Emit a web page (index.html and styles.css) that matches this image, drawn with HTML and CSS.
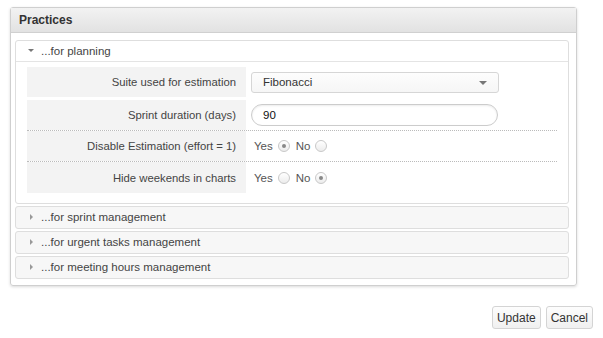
FILE: index.html
```html
<!DOCTYPE html>
<html lang="en">
<head>
    <meta charset="UTF-8">
    <title>Practices</title>
    <link rel="stylesheet" href="styles.css">
</head>
<body>

<div class="panel">
    <div class="panel-header">Practices</div>
    <div class="panel-body">

        <div class="section open">
            <div class="section-title"><span class="arrow down"></span>...for planning</div>
            <div class="section-content">
                <div class="row first">
                    <div class="label">Suite used for estimation</div>
                    <div class="value">
                        <div class="select">Fibonacci<span class="caret"></span></div>
                    </div>
                </div>
                <div class="row dotted">
                    <div class="label">Sprint duration (days)</div>
                    <div class="value">
                        <input class="text" type="text" value="90">
                    </div>
                </div>
                <div class="row dotted">
                    <div class="label">Disable Estimation (effort = 1)</div>
                    <div class="value radios">
                        Yes <span class="radio checked"></span> No <span class="radio"></span>
                    </div>
                </div>
                <div class="row last">
                    <div class="label">Hide weekends in charts</div>
                    <div class="value radios">
                        Yes <span class="radio"></span> No <span class="radio checked"></span>
                    </div>
                </div>
            </div>
        </div>

        <div class="section">
            <div class="section-title"><span class="arrow right"></span>...for sprint management</div>
        </div>
        <div class="section">
            <div class="section-title"><span class="arrow right"></span>...for urgent tasks management</div>
        </div>
        <div class="section">
            <div class="section-title"><span class="arrow right"></span>...for meeting hours management</div>
        </div>

    </div>
</div>

<div class="actions">
    <button>Update</button>
    <button>Cancel</button>
</div>

</body>
</html>
```

FILE: styles.css
```css
body {
    margin: 0;
    padding: 7px 10px 0 10px;
    font-family: "Liberation Sans", Arial, sans-serif;
    font-size: 11.5px;
    color: #333;
    background: #fff;
}
.panel {
    width: 565px;
    border: 1px solid #cfcfcf;
    border-radius: 3px;
    box-shadow: 0 1px 3px rgba(0, 0, 0, 0.15);
}
.panel-header {
    height: 24px;
    line-height: 24px;
    padding-left: 8px;
    font-weight: bold;
    font-size: 12px;
    color: #333;
    background: linear-gradient(#f2f2f2, #e2e2e2);
    border-bottom: 1px solid #d0d0d0;
}
.panel-body {
    padding: 7px 7px 4px 4px;
}
.section {
    border: 1px solid #dedede;
    border-radius: 3px;
    margin-bottom: 2px;
    background: #f7f7f7;
}
.section.open {
    background: #fff;
}
.section-title {
    height: 21px;
    line-height: 21px;
    padding-left: 12px;
    color: #444;
}
.section.open .section-title {
    height: 20px;
    line-height: 20px;
    border-bottom: 1px solid #e4e4e4;
}
.arrow {
    display: inline-block;
    width: 0;
    height: 0;
    margin-right: 7px;
    vertical-align: middle;
}
.arrow.down {
    border-left: 3px solid transparent;
    border-right: 3px solid transparent;
    border-top: 3px solid #777;
    margin-top: -2px;
}
.arrow.right {
    border-top: 3px solid transparent;
    border-bottom: 3px solid transparent;
    border-left: 3px solid #999;
    margin-left: 2px;
    margin-right: 8px;
    margin-top: -2px;
}
.section-content {
    padding: 5px 11px 10px 11px;
}
.row {
    display: flex;
    height: 30px;
}
.row.first {
    margin-bottom: 3px;
}
.row.dotted {
    border-bottom: 1px dotted #bbb;
}
.row.last {
    height: 31px;
}
.label {
    width: 209px;
    padding-right: 10px;
    background: #f3f3f3;
    display: flex;
    align-items: center;
    justify-content: flex-end;
    font-size: 11.3px;
    color: #444;
}
.value {
    padding-left: 5px;
    display: flex;
    align-items: center;
}
.select {
    position: relative;
    width: 235px;
    height: 19px;
    line-height: 19px;
    padding-left: 11px;
    border: 1px solid #d6d6d6;
    border-radius: 3px;
    background: linear-gradient(#fdfdfd, #f6f6f6);
    color: #333;
}
.caret {
    position: absolute;
    right: 11px;
    top: 8px;
    border-left: 4px solid transparent;
    border-right: 4px solid transparent;
    border-top: 4px solid #777;
}
.text {
    width: 247px;
    height: 22px;
    box-sizing: border-box;
    padding: 0 11px;
    border: 1px solid #ccc;
    border-radius: 11px;
    font-family: inherit;
    font-size: 11.5px;
    color: #111;
    box-shadow: inset 0 1px 2px rgba(0, 0, 0, 0.08);
    outline: none;
}
.radios {
    padding-left: 8px;
    color: #555;
    gap: 5px;
}
.radio {
    display: inline-block;
    width: 10px;
    height: 10px;
    border: 1px solid #c8c8c8;
    border-radius: 50%;
    background: linear-gradient(#fff, #ececec);
    position: relative;
    margin-right: 1px;
}
.radio.checked::after {
    content: "";
    position: absolute;
    left: 3px;
    top: 3px;
    width: 4px;
    height: 4px;
    border-radius: 50%;
    background: #888;
}
.actions {
    display: flex;
    justify-content: flex-end;
    gap: 5px;
    margin-top: 20px;
}
.actions button {
    height: 23px;
    padding: 0 4px;
    font-family: "Liberation Sans", Arial, sans-serif;
    font-size: 12px;
    color: #333;
    border: 1px solid #d4d4d4;
    border-radius: 3px;
    background: linear-gradient(#fdfdfd, #f0f0f0);
}
```
